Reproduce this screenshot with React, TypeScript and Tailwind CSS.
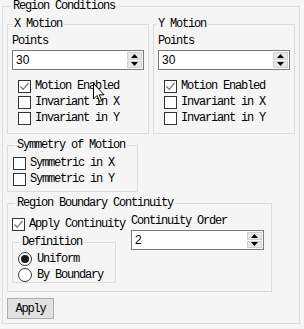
import React from "react";

const font = "font-[family-name:Liberation_Mono,monospace] text-[12px] tracking-[-1.2px] leading-[12px] text-black";

function Check({ checked }: { checked?: boolean }) {
  return (
    <span className="flex h-[13px] w-[13px] shrink-0 items-center justify-center border border-[#333333] bg-white">
      {checked && (
        <svg width="11" height="11" viewBox="0 0 11 11">
          <path d="M1.5 5.5 L4.2 8.3 L9.5 2" fill="none" stroke="#7a7a7a" strokeWidth="1.3" />
        </svg>
      )}
    </span>
  );
}

function CheckRow({ label, checked }: { label: string; checked?: boolean }) {
  return (
    <div className="flex h-[16px] items-center gap-[4px]">
      <Check checked={checked} />
      <span className={font}>{label}</span>
    </div>
  );
}

function Radio({ label, on }: { label: string; on?: boolean }) {
  return (
    <div className="flex h-[16px] items-center gap-[5px]">
      <span className="flex h-[14px] w-[14px] shrink-0 items-center justify-center rounded-full border border-[#333333] bg-white">
        {on && <span className="h-[8px] w-[8px] rounded-full bg-[#1a1a1a]" />}
      </span>
      <span className={font}>{label}</span>
    </div>
  );
}

function Spin({ value, w }: { value: string; w: string }) {
  return (
    <div className={`flex h-[20px] ${w} items-center border border-[#7a7a7a] bg-white`}>
      <span className="flex-1 pl-[3px] font-[family-name:Liberation_Sans,sans-serif] text-[12px] leading-[14px] text-black">{value}</span>
      <div className="mr-[1px] flex h-[16px] w-[15px] flex-col gap-[1px]">
        <div className="flex flex-1 items-center justify-center border border-[#cfcfcf] bg-[#e8e8e8]">
          <svg width="7" height="4" viewBox="0 0 7 4">
            <path d="M3.5 0 L7 4 L0 4 Z" fill="#000" />
          </svg>
        </div>
        <div className="flex flex-1 items-center justify-center border border-[#cfcfcf] bg-[#e8e8e8]">
          <svg width="7" height="4" viewBox="0 0 7 4">
            <path d="M0 0 L7 0 L3.5 4 Z" fill="#000" />
          </svg>
        </div>
      </div>
    </div>
  );
}

function Group({
  title,
  legendMl,
  className,
  children,
}: {
  title: string;
  legendMl: string;
  className?: string;
  children: React.ReactNode;
}) {
  return (
    <fieldset className={`m-0 border border-[#dcdcdc] p-0 ${className ?? ""}`}>
      <legend className={`${legendMl} px-[2px] ${font}`}>{title}</legend>
      {children}
    </fieldset>
  );
}

function MotionBox({ axis, ml }: { axis: string; ml: string }) {
  return (
    <Group title={`${axis} Motion`} legendMl={ml} className="h-[116px] w-[142px]">
      <div className="flex flex-col pl-[4px]">
        <span className={`mt-[5px] ${font}`}>Points</span>
        <div className="mt-[3px]">
          <Spin value="30" w="w-[132px]" />
        </div>
        <div className="mt-[8px] flex flex-col pl-[6px]">
          <CheckRow label="Motion Enabled" checked />
          <CheckRow label="Invariant in X" />
          <CheckRow label="Invariant in Y" />
        </div>
      </div>
    </Group>
  );
}

export default function App() {
  return (
    <div className="relative h-[329px] w-[304px] overflow-hidden bg-[#f5f5f5] pl-[2px]">
      <Group title="Region Conditions" legendMl="ml-[8px]" className="h-[324px] w-[298px]">
        <div className="flex flex-col pl-[4px]">
          <div className="mt-[6px] flex gap-[4px]">
            <MotionBox axis="X" ml="ml-[4px]" />
            <MotionBox axis="Y" ml="ml-[2px]" />
          </div>

          <Group title="Symmetry of Motion" legendMl="ml-[7px]" className="mt-[5px] h-[53px] w-[131px]">
            <div className="mt-[4px] flex flex-col pl-[5px]">
              <CheckRow label="Symmetric in X" />
              <CheckRow label="Symmetric in Y" />
            </div>
          </Group>

          <Group title="Region Boundary Continuity" legendMl="ml-[7px]" className="mt-[5px] h-[95px] w-[265px]">
            <div className="flex pl-[4px]">
              <div className="flex flex-col">
                <div className="mt-[7px]">
                  <CheckRow label="Apply Continuity" checked />
                </div>
                <Group title="Definition" legendMl="ml-[7px]" className="mt-[4px] h-[47px] w-[104px]">
                  <div className="mt-[3px] flex flex-col pl-[5px]">
                    <Radio label="Uniform" on />
                    <Radio label="By Boundary" />
                  </div>
                </Group>
              </div>
              <div className="ml-[6px] flex flex-col">
                <span className={`mt-[6px] ${font}`}>Continuity Order</span>
                <div className="mt-[3px]">
                  <Spin value="2" w="w-[133px]" />
                </div>
              </div>
            </div>
          </Group>

          <button className={`mt-[6px] h-[21px] w-[47px] border border-[#adadad] bg-[#e1e1e1] ${font}`}>
            Apply
          </button>
        </div>
      </Group>

      <svg className="absolute left-[93px] top-[83px]" width="13" height="20" viewBox="0 0 13 20">
        <path d="M0.5 0.5 L0.5 16 L4 12.5 L6.5 18.5 L8.7 17.6 L6.3 11.8 L11 11.8 Z" fill="#fff" stroke="#000" strokeWidth="1" />
      </svg>
    </div>
  );
}
